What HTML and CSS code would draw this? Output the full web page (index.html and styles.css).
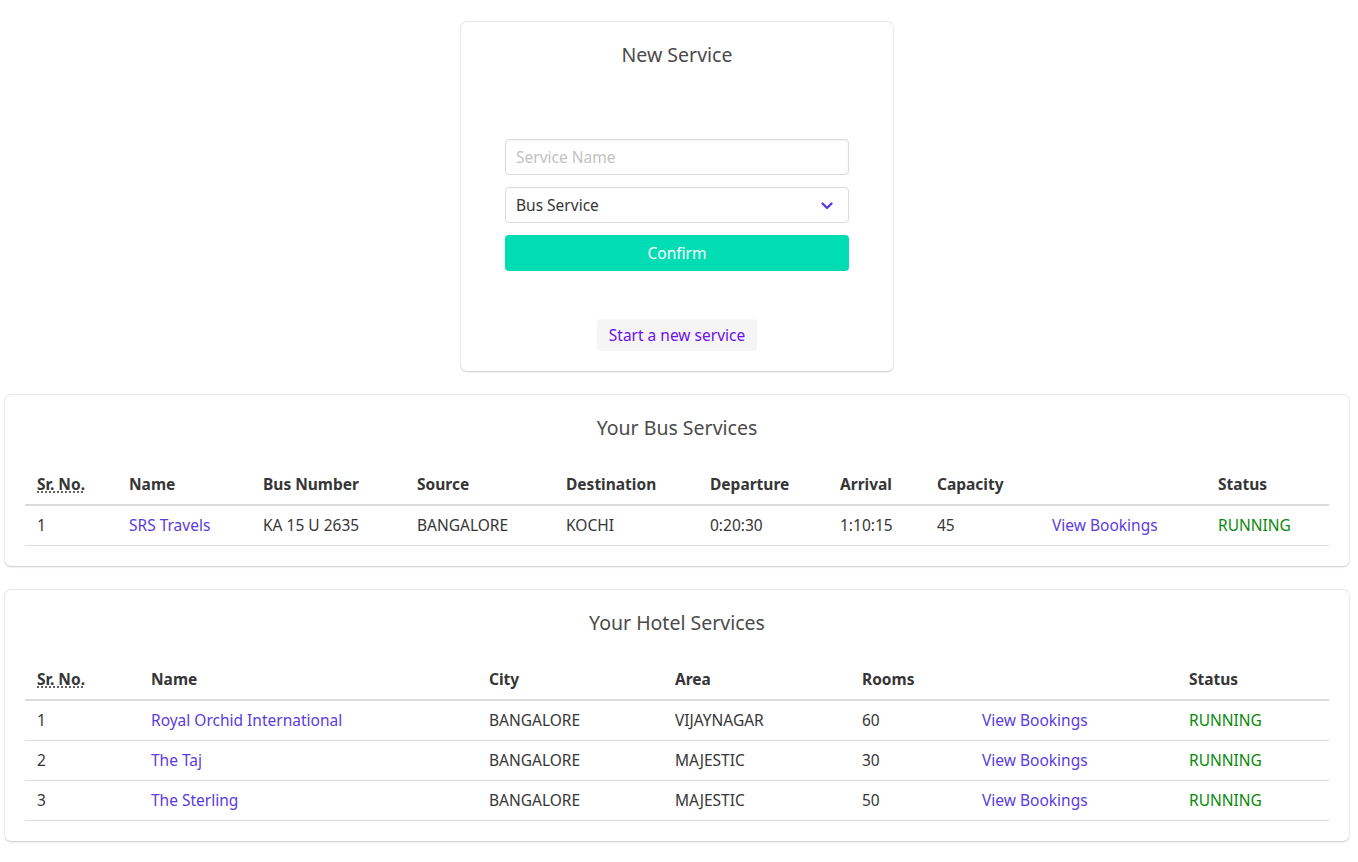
FILE: index.html
```html
<!DOCTYPE html>
<html lang="en">
<head>
<meta charset="utf-8">
<title>Services</title>
<link rel="stylesheet" href="styles.css">
</head>
<body>
<main class="page">
  <section class="box new-service">
    <h2 class="subtitle">New Service</h2>
    <form class="service-form">
      <input class="input" type="text" placeholder="Service Name">
      <div class="select">
        <span class="select-value">Bus Service</span>
        <svg class="chevron" width="14" height="10" viewBox="0 0 14 10"><path d="M2.5 2.5 L7 7 L11.5 2.5" fill="none" stroke="currentColor" stroke-width="2.4" stroke-linecap="round" stroke-linejoin="round"/></svg>
      </div>
      <button class="confirm" type="button">Confirm</button>
    </form>
    <div class="start-wrap"><button class="start" type="button">Start a new service</button></div>
  </section>

  <section class="box">
    <h2 class="subtitle">Your Bus Services</h2>
    <table class="table bus">
      <colgroup>
        <col class="b1"><col class="b2"><col class="b3"><col class="b4"><col class="b5"><col class="b6"><col class="b7"><col class="b8"><col class="b9"><col class="b10">
      </colgroup>
      <thead>
        <tr><th><abbr title="Serial Number">Sr. No.</abbr></th><th>Name</th><th>Bus Number</th><th>Source</th><th>Destination</th><th>Departure</th><th>Arrival</th><th>Capacity</th><th></th><th>Status</th></tr>
      </thead>
      <tbody>
        <tr><td>1</td><td><a href="#">SRS Travels</a></td><td>KA 15 U 2635</td><td>BANGALORE</td><td>KOCHI</td><td>0:20:30</td><td>1:10:15</td><td>45</td><td><a href="#">View Bookings</a></td><td class="running">RUNNING</td></tr>
      </tbody>
    </table>
  </section>

  <section class="box">
    <h2 class="subtitle">Your Hotel Services</h2>
    <table class="table hotel">
      <colgroup>
        <col class="h1"><col class="h2"><col class="h3"><col class="h4"><col class="h5"><col class="h6"><col class="h7">
      </colgroup>
      <thead>
        <tr><th><abbr title="Serial Number">Sr. No.</abbr></th><th>Name</th><th>City</th><th>Area</th><th>Rooms</th><th></th><th>Status</th></tr>
      </thead>
      <tbody>
        <tr><td>1</td><td><a href="#">Royal Orchid International</a></td><td>BANGALORE</td><td>VIJAYNAGAR</td><td>60</td><td><a href="#">View Bookings</a></td><td class="running">RUNNING</td></tr>
        <tr><td>2</td><td><a href="#">The Taj</a></td><td>BANGALORE</td><td>MAJESTIC</td><td>30</td><td><a href="#">View Bookings</a></td><td class="running">RUNNING</td></tr>
        <tr><td>3</td><td><a href="#">The Sterling</a></td><td>BANGALORE</td><td>MAJESTIC</td><td>50</td><td><a href="#">View Bookings</a></td><td class="running">RUNNING</td></tr>
      </tbody>
    </table>
  </section>
</main>
</body>
</html>
```

FILE: styles.css
```css
* { box-sizing: border-box; }
html, body { margin: 0; padding: 0; background: #fff; }
body {
  font-family: "Noto Sans", "Open Sans", sans-serif;
  font-size: 15.5px;
  color: #4a4a4a;
  line-height: 1.5;
}
.page {
  padding: 22px 9px 20px 5px;
  display: flex;
  flex-direction: column;
  align-items: stretch;
  gap: 23px;
}
.box {
  background: #fff;
  border-radius: 6px;
  box-shadow: 0 0.5px 2px rgba(10,10,10,0.18), 0 0 0 1px rgba(10,10,10,0.04);
  padding: 20px;
}
.page > .box + .box { margin-top: 1px; }
.subtitle {
  margin: 0 0 24px;
  font-weight: 400;
  font-size: 19.5px;
  line-height: 25px;
  text-align: center;
  color: #4a4a4a;
}
.new-service {
  width: 432px;
  align-self: center;
  padding: 20px 44px 20px;
}
.new-service .subtitle { margin-bottom: 72px; }
.service-form {
  display: flex;
  flex-direction: column;
  gap: 12px;
}
.input, .select, .confirm {
  height: 36px;
  border-radius: 4px;
  font-family: inherit;
  font-size: 15.5px;
}
.input {
  border: 1px solid #dbdbdb;
  padding: 0 10px;
  color: #363636;
  box-shadow: inset 0 1px 2px rgba(10,10,10,0.05);
  outline: none;
}
.input::placeholder { color: #c2c2c2; }
.select {
  border: 1px solid #dbdbdb;
  padding: 1px 14px 0 10px;
  display: flex;
  align-items: center;
  justify-content: space-between;
  color: #363636;
}
.chevron { color: #5b3ce0; }
.confirm {
  border: none;
  background: #00dcb4;
  color: #fff;
  cursor: pointer;
}
.start-wrap {
  display: flex;
  justify-content: center;
  margin-top: 48px;
}
.start {
  border: none;
  border-radius: 4px;
  background: #f5f5f5;
  color: #6d0ff0;
  font-family: inherit;
  font-size: 15.5px;
  height: 32px;
  padding: 0 12px;
  cursor: pointer;
}
.table {
  width: 100%;
  border-collapse: collapse;
  table-layout: fixed;
  color: #363636;
}
.table th, .table td {
  text-align: left;
  padding: 8px 12px;
  border-bottom: 1px solid #dbdbdb;
  vertical-align: top;
  white-space: nowrap;
  line-height: 23px;
}
.table th {
  font-weight: 700;
  border-bottom-width: 2px;
  line-height: 24px;
  color: #363636;
}
.table abbr {
  text-decoration: underline dotted;
  text-underline-offset: 2px;
}
.table a { color: #5b3ce0; text-decoration: none; }
.running { color: #0a8a0a; }
.b1 { width: 92px; } .b2 { width: 134px; } .b3 { width: 154px; } .b4 { width: 149px; } .b5 { width: 144px; }
.b6 { width: 130px; } .b7 { width: 97px; } .b8 { width: 115px; } .b9 { width: 166px; } .b10 { width: 123px; }
.h1 { width: 114px; } .h2 { width: 338px; } .h3 { width: 186px; } .h4 { width: 187px; } .h5 { width: 120px; }
.h6 { width: 207px; } .h7 { width: 152px; }
```
